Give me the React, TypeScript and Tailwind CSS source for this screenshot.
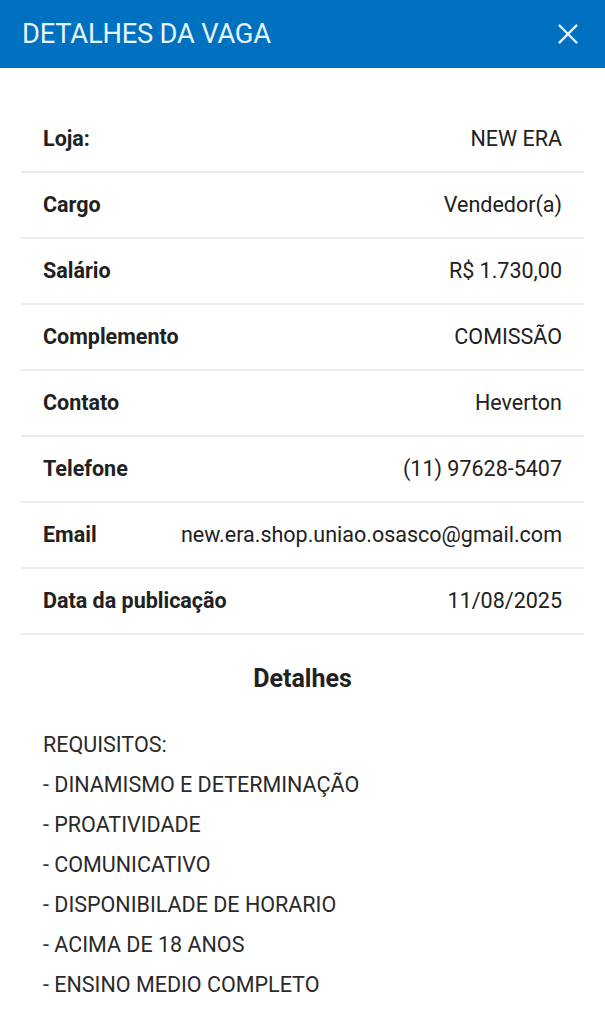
const rows: [string, string][] = [
  ['Loja:', 'NEW ERA'],
  ['Cargo', 'Vendedor(a)'],
  ['Salário', 'R$ 1.730,00'],
  ['Complemento', 'COMISSÃO'],
  ['Contato', 'Heverton'],
  ['Telefone', '(11) 97628-5407'],
  ['Email', 'new.era.shop.uniao.osasco@gmail.com'],
  ['Data da publicação', '11/08/2025'],
];

const requisitos = [
  'REQUISITOS:',
  '- DINAMISMO E DETERMINAÇÃO',
  '- PROATIVIDADE',
  '- COMUNICATIVO',
  '- DISPONIBILADE DE HORARIO',
  '- ACIMA DE 18 ANOS',
  '- ENSINO MEDIO COMPLETO',
];

export default function App() {
  return (
    <div className="min-h-[1024px] bg-white font-['Roboto',sans-serif] text-[#212121]">
      {/* Header */}
      <div className="h-[68px] bg-[#0070c0] flex items-center justify-between pl-[22px] pr-[26px]">
        <h1 className="text-[27.3px] text-[#e6f4ff] tracking-[-0.2px]">DETALHES DA VAGA</h1>
        <svg className="w-[22px] h-[22px] text-[#e6f4ff]" viewBox="0 0 24 24" fill="none" stroke="currentColor" strokeWidth={2.6} strokeLinecap="square">
          <path d="M3 3l18 18M21 3L3 21" />
        </svg>
      </div>

      {/* Table */}
      <div className="mx-[21px] mt-[39px]">
        {rows.map(([label, value]) => (
          <div key={label} className="h-[66px] flex items-center justify-between px-[22px] border-b-2 border-[#ebebeb]">
            <span className="text-[21.5px] font-bold">{label}</span>
            <span className="text-[21.5px]">{value}</span>
          </div>
        ))}
      </div>

      {/* Details */}
      <h2 className="text-center text-[25px] font-bold mt-[25px]">Detalhes</h2>
      <div className="px-[43px] mt-[27px] text-[21.5px] leading-[40px] text-[#2a2a2a]">
        {requisitos.map((r) => (
          <div key={r}>{r}</div>
        ))}
      </div>
    </div>
  );
}
